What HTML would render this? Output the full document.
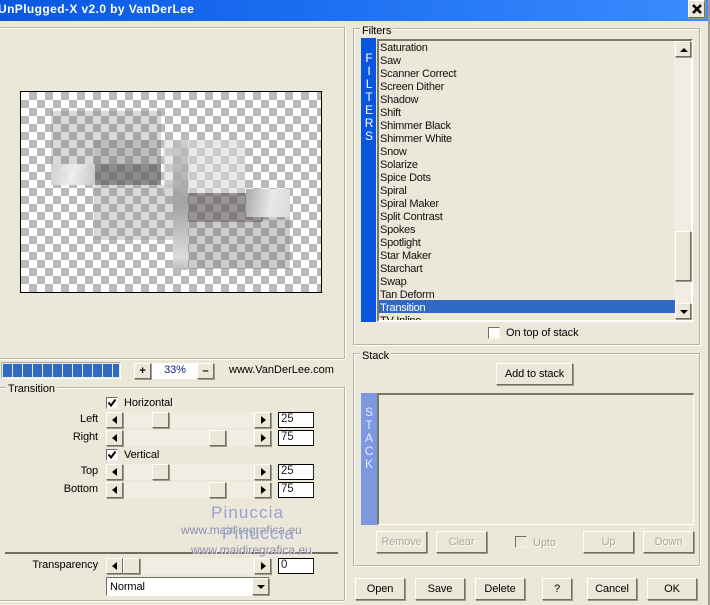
<!DOCTYPE html>
<html><head><meta charset="utf-8"><style>
html,body{margin:0;padding:0}
body{width:710px;height:605px;overflow:hidden;background:#ebe8d9;position:relative;font:11px/15px "Liberation Sans",sans-serif;letter-spacing:-.1px;color:#000}
div,span,svg{position:absolute;box-sizing:border-box;white-space:nowrap}
.f{border:1px solid #b5b2a4;box-shadow:1px 1px 0 #fff,inset 1px 1px 0 #fff}
.l{background:#ebe8d9;padding:0 2px;height:13px;line-height:14px}
.b{background:#ebe8d9;border:1px solid;border-color:#fff #716f64 #716f64 #fff;box-shadow:1px 1px 0 #9d9a8c;text-align:center;line-height:21px}
.d{color:#a9a698;text-shadow:1px 1px 0 #fff}
.t{background-color:#f5f3ea;background-image:repeating-conic-gradient(#e8e5d7 0 25%,#f8f6ee 0 50%);background-size:2px 2px}
.s{background:#ebe8d9;border:1px solid;border-color:#fff #716f64 #716f64 #fff;box-shadow:1px 1px 0 #9d9a8c}
.al,.ar,.au,.ad{width:0;height:0;border-style:solid;border-color:transparent}
.al{border-width:4px 5px 4px 0;border-right-color:#000;left:5px;top:3px}
.ar{border-width:4px 0 4px 5px;border-left-color:#000;left:6px;top:3px}
.au{border-width:0 4px 4px;border-bottom-color:#000;left:4px;top:6px}
.ad{border-width:4px 4px 0;border-top-color:#000;left:4px;top:6px}
.i{background:#fff;border:1px solid #000;border-right-color:#222;padding-left:2px;line-height:13px;color:#222;font-size:11.5px}
.c{width:12px;height:12px;background:#fff;border:1px solid;border-color:#716f64 #f5f3ea #f5f3ea #716f64}
.k{font-size:12px;color:#fff;width:16px;text-align:center}
.r{left:380px;height:13px;line-height:14px;color:#111;letter-spacing:-.25px}
.w{color:#9ba1c4;text-shadow:1px 1px 0 #e8e8ee;letter-spacing:0}
.p{background:rgba(110,110,110,.3)}
</style></head><body>
<div style="left:0;top:0;width:710px;height:21px;background:linear-gradient(90deg,#0a57e2,#1a6cf0 40%,#3a8dfd)"></div>
<div style="left:-2px;top:0;height:19px;color:#fff;font:bold 12px/18px 'Liberation Sans',sans-serif;letter-spacing:.4px">UnPlugged-X v2.0 by VanDerLee</div>
<div class="s" style="left:688px;top:0;width:17px;height:18px"><svg style="left:2px;top:2px" width="12" height="12" viewBox="0 0 12 12"><path d="M2 2L10 10M10 2L2 10" stroke="#000" stroke-width="2.6" fill="none"/></svg></div>
<div style="left:708px;top:0;width:2px;height:605px;background:#9d9a8c"></div>

<!-- Preview frame -->
<div class="f" style="left:-3px;top:27px;width:348px;height:332px"></div>
<div style="left:20px;top:91px;width:302px;height:202px;border:1px solid #000;background-color:#fff;background-image:repeating-conic-gradient(#fff 0 25%,#b9b9b9 0 50%);background-size:16px 16px;background-position:8px 0;overflow:hidden">
 <div style="left:30px;top:19px;width:110px;height:74px;background:rgba(130,130,130,.3)"></div>
 <div style="left:73px;top:48px;width:67px;height:45px;background:rgba(110,110,110,.25)"></div>
 <div style="left:30px;top:72px;width:44px;height:21px;background:linear-gradient(100deg,#d0d0d0,#f0f0f0 50%,#c8c8c8);opacity:.95"></div>
 <div style="left:74px;top:72px;width:66px;height:21px;background:rgba(70,70,70,.4)"></div>
 <div style="left:73px;top:93px;width:80px;height:55px;background:rgba(150,150,150,.35)"></div>
 <div style="left:142px;top:48px;width:82px;height:53px;background:rgba(215,215,215,.55)"></div>
 <div style="left:152px;top:101px;width:117px;height:76px;background:rgba(125,125,125,.4)"></div>
 <div style="left:167px;top:101px;width:75px;height:29px;background:rgba(85,75,75,.42)"></div>
 <div style="left:225px;top:97px;width:44px;height:28px;background:linear-gradient(100deg,#aaa,#e8e8e8 55%,#dcdcdc)"></div>
 <div style="left:152px;top:48px;width:15px;height:130px;background:linear-gradient(180deg,rgba(170,170,170,.4),#a5a3a3 50%,#dcdcdc 90%,#bbb)"></div>
</div>

<!-- Progress / zoom -->
<div style="left:1px;top:362px;width:120px;height:17px;border:1px solid #999;border-color:#aaa #fff #fff #aaa"></div>
<div style="left:3px;top:364px;width:116px;height:13px;background:repeating-linear-gradient(90deg,#316ac5 0 9px,#ebe8d9 9px 10px)"></div>
<div class="b" style="left:134px;top:363px;width:17px;height:16px;line-height:14px;font-weight:bold">+</div>
<div style="left:152px;top:363px;width:45px;height:16px;background:#fff;text-align:center;line-height:15px;color:#0a1a7a;padding-left:1px">33%</div>
<div class="b" style="left:197px;top:363px;width:17px;height:16px;line-height:14px;font-weight:bold">–</div>
<div style="left:229px;top:363px;letter-spacing:0">www.VanDerLee.com</div>

<!-- Transition frame -->
<div class="f" style="left:-3px;top:387px;width:348px;height:214px"></div>
<div class="l" style="left:6px;top:382px">Transition</div>

<div class="c" style="left:106px;top:397px"><svg style="left:0;top:0" width="10" height="10" viewBox="0 0 10 10"><path d="M1.5 4.5L4 7.5L8.5 1.5" stroke="#000" stroke-width="2" fill="none"/></svg></div>
<div style="left:124px;top:396px">Horizontal</div>
<div style="right:612px;top:412px">Left</div>
<div class="t" style="left:106px;top:412px;width:165px;height:16px"></div>
<div class="s" style="left:106px;top:412px;width:17px;height:16px"><span class="al"></span></div>
<div class="s" style="left:254px;top:412px;width:17px;height:16px"><span class="ar"></span></div>
<div class="s" style="left:152px;top:412px;width:17px;height:16px"></div>
<div class="i" style="left:278px;top:412px;width:36px;height:16px">25</div>

<div style="right:612px;top:430px">Right</div>
<div class="t" style="left:106px;top:430px;width:165px;height:16px"></div>
<div class="s" style="left:106px;top:430px;width:17px;height:16px"><span class="al"></span></div>
<div class="s" style="left:254px;top:430px;width:17px;height:16px"><span class="ar"></span></div>
<div class="s" style="left:209px;top:430px;width:17px;height:16px"></div>
<div class="i" style="left:278px;top:430px;width:36px;height:16px">75</div>

<div class="c" style="left:106px;top:449px"><svg style="left:0;top:0" width="10" height="10" viewBox="0 0 10 10"><path d="M1.5 4.5L4 7.5L8.5 1.5" stroke="#000" stroke-width="2" fill="none"/></svg></div>
<div style="left:124px;top:448px">Vertical</div>
<div style="right:612px;top:464px">Top</div>
<div class="t" style="left:106px;top:464px;width:165px;height:16px"></div>
<div class="s" style="left:106px;top:464px;width:17px;height:16px"><span class="al"></span></div>
<div class="s" style="left:254px;top:464px;width:17px;height:16px"><span class="ar"></span></div>
<div class="s" style="left:152px;top:464px;width:17px;height:16px"></div>
<div class="i" style="left:278px;top:464px;width:36px;height:16px">25</div>

<div style="right:612px;top:482px">Bottom</div>
<div class="t" style="left:106px;top:482px;width:165px;height:16px"></div>
<div class="s" style="left:106px;top:482px;width:17px;height:16px"><span class="al"></span></div>
<div class="s" style="left:254px;top:482px;width:17px;height:16px"><span class="ar"></span></div>
<div class="s" style="left:209px;top:482px;width:17px;height:16px"></div>
<div class="i" style="left:278px;top:482px;width:36px;height:16px">75</div>

<div style="left:5px;top:552px;width:333px;height:2px;background:#716f64"></div>

<div class="w" style="left:211px;top:503px;font:17px/20px 'Liberation Sans',sans-serif;letter-spacing:1.1px">Pinuccia</div>
<div class="w" style="left:181px;top:523px;font-size:12px;color:#8e8e9e">www.maidiregrafica.eu</div>
<div class="w" style="left:222px;top:524px;font:17px/20px 'Liberation Sans',sans-serif;letter-spacing:1.1px">Pinuccia</div>
<div class="w" style="left:191px;top:543px;font-size:12px;color:#8e8e9e">www.maidiregrafica.eu</div>

<div style="right:612px;top:558px">Transparency</div>
<div class="t" style="left:106px;top:558px;width:165px;height:16px"></div>
<div class="s" style="left:106px;top:558px;width:17px;height:16px"><span class="al"></span></div>
<div class="s" style="left:254px;top:558px;width:17px;height:16px"><span class="ar"></span></div>
<div class="s" style="left:123px;top:558px;width:17px;height:16px"></div>
<div class="i" style="left:278px;top:558px;width:36px;height:16px">0</div>

<div style="left:106px;top:577px;width:164px;height:19px;background:#fff;border:1px solid;border-color:#716f64 #fff #fff #716f64;padding-left:3px;line-height:18px">Normal</div>
<div class="s" style="left:252px;top:578px;width:17px;height:17px"><span class="ad" style="top:6px"></span></div>

<!-- Filters -->
<div class="f" style="left:353px;top:28px;width:347px;height:317px"></div>
<div class="l" style="left:360px;top:24px">Filters</div>
<div style="left:361px;top:38px;width:15px;height:284px;background:#0a55e0"></div>
<div class="k" style="left:361px;top:51px">F</div>
<div class="k" style="left:361px;top:64px">I</div>
<div class="k" style="left:361px;top:77px">L</div>
<div class="k" style="left:361px;top:90px">T</div>
<div class="k" style="left:361px;top:103px">E</div>
<div class="k" style="left:361px;top:116px">R</div>
<div class="k" style="left:361px;top:129px">S</div>

<div style="left:377px;top:39px;width:316px;height:283px;border:2px solid;border-color:#7a7769 #fff #fff #7a7769;overflow:hidden;background:#ebe8d9">
<div class="t" style="right:0;top:0;width:17px;height:279px"></div>
<div style="left:0;top:259px;width:296px;height:13px;background:#316ac5"></div>
</div>
<div class="s" style="left:675px;top:41px;width:16px;height:16px"><span class="au"></span></div>
<div class="s" style="left:675px;top:231px;width:16px;height:50px"></div>
<div class="s" style="left:675px;top:303px;width:16px;height:16px"><span class="ad"></span></div>

<div class="r" style="top:41px">Saturation</div>
<div class="r" style="top:54px">Saw</div>
<div class="r" style="top:67px">Scanner Correct</div>
<div class="r" style="top:80px">Screen Dither</div>
<div class="r" style="top:93px">Shadow</div>
<div class="r" style="top:106px">Shift</div>
<div class="r" style="top:119px">Shimmer Black</div>
<div class="r" style="top:132px">Shimmer White</div>
<div class="r" style="top:145px">Snow</div>
<div class="r" style="top:158px">Solarize</div>
<div class="r" style="top:171px">Spice Dots</div>
<div class="r" style="top:184px">Spiral</div>
<div class="r" style="top:197px">Spiral Maker</div>
<div class="r" style="top:210px">Split Contrast</div>
<div class="r" style="top:223px">Spokes</div>
<div class="r" style="top:236px">Spotlight</div>
<div class="r" style="top:249px">Star Maker</div>
<div class="r" style="top:262px">Starchart</div>
<div class="r" style="top:275px">Swap</div>
<div class="r" style="top:288px">Tan Deform</div>
<div class="r" style="top:301px;color:#fff">Transition</div>
<div style="left:379px;top:314px;width:290px;height:6px;overflow:hidden"><span style="left:1px;top:0;letter-spacing:-.25px">TV Inline</span></div>

<div class="c" style="left:488px;top:327px"></div>
<div style="left:506px;top:326px">On top of stack</div>

<!-- Stack -->
<div class="f" style="left:353px;top:353px;width:347px;height:213px"></div>
<div class="l" style="left:360px;top:349px">Stack</div>
<div class="b" style="left:496px;top:363px;width:77px;height:22px">Add to stack</div>
<div style="left:361px;top:393px;width:16px;height:132px;background:#7b98e0"></div>
<div class="k" style="left:361px;top:405px;color:#e8ecf8">S</div>
<div class="k" style="left:361px;top:418px;color:#e8ecf8">T</div>
<div class="k" style="left:361px;top:431px;color:#e8ecf8">A</div>
<div class="k" style="left:361px;top:444px;color:#e8ecf8">C</div>
<div class="k" style="left:361px;top:457px;color:#e8ecf8">K</div>
<div style="left:377px;top:393px;width:317px;height:132px;border:1px solid;border-color:#7a7769 #fff #fff #7a7769;border-top-width:2px;border-left-width:2px"></div>

<div class="b d" style="left:376px;top:531px;width:51px;height:22px">Remove</div>
<div class="b d" style="left:436px;top:531px;width:51px;height:22px">Clear</div>
<div class="c" style="left:515px;top:536px;background:#ebe8d9"></div>
<div class="d" style="left:533px;top:536px">Upto</div>
<div class="b d" style="left:583px;top:531px;width:51px;height:22px">Up</div>
<div class="b d" style="left:643px;top:531px;width:51px;height:22px">Down</div>

<div class="b" style="left:355px;top:578px;width:50px;height:22px">Open</div>
<div class="b" style="left:415px;top:578px;width:50px;height:22px">Save</div>
<div class="b" style="left:475px;top:578px;width:50px;height:22px">Delete</div>
<div class="b" style="left:542px;top:578px;width:30px;height:22px">?</div>
<div class="b" style="left:587px;top:578px;width:50px;height:22px">Cancel</div>
<div class="b" style="left:647px;top:578px;width:50px;height:22px">OK</div>
</body></html>
